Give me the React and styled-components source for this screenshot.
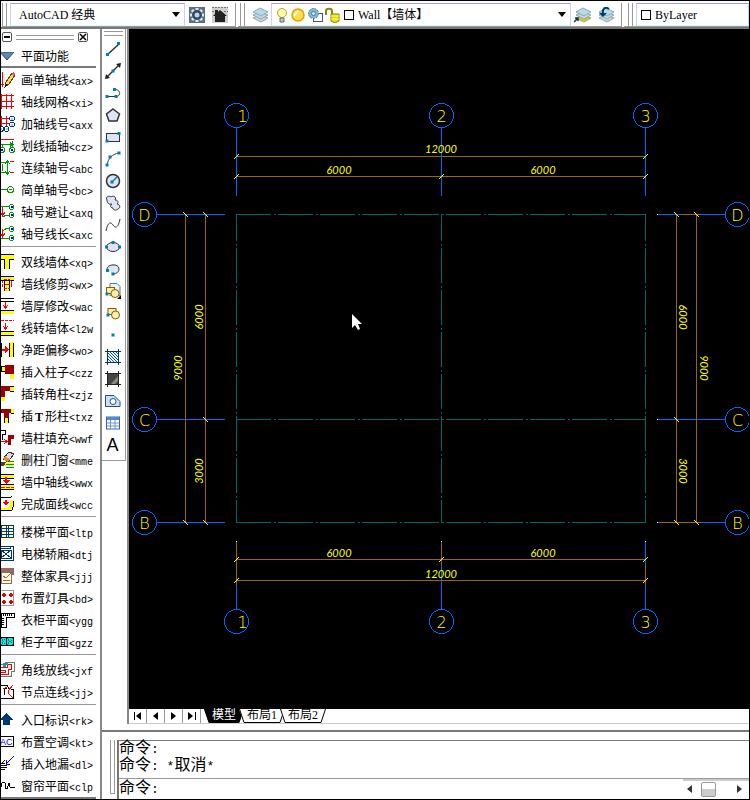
import styled, { createGlobalStyle } from "styled-components"

const GlobalStyle = createGlobalStyle`
  * { box-sizing: border-box; }
  body {
    margin: 0;
    background: #fff;
    color: #000;
    font-family: "Liberation Serif", "Noto Sans CJK SC", serif;
    font-size: 12px;
  }
  button, select, input {
    margin: 0;
    padding: 0;
    border: 0;
    background: none;
    color: inherit;
    font: inherit;
  }
  svg { display: block; flex: none; }
`

const Window = styled.div`
  display: flex;
  flex-direction: column;
  min-height: 100vh;
  border: 1px solid #000;
`

/* top toolbars */
const TopBar = styled.header`
  display: flex;
  gap: 2px;
  height: 26px;
  padding: 2px 0 0 1px;
`
const ToolGroup = styled.div`
  display: flex;
  align-items: stretch;
  flex: ${p => p.$grow || "none"};
  min-width: 0;
  padding-right: ${p => p.$last ? 0 : "4px"};
  border-right: ${p => p.$last ? "none" : "1px solid #999"};
  border-bottom: 1px solid #999;
`
const Grip = styled.span`
  flex: none;
  width: 5px;
  margin: 0 3px 0 ${p => p.$gap || "0"};
  border: solid #999;
  border-width: 0 1px;
`
const Combo = styled.label`
  display: flex;
  align-items: center;
  gap: 2px;
  flex: ${p => p.$width ? `0 0 ${p.$width}` : "1"};
  min-width: 0;
  padding: 0 4px;
  border: 1px solid #ccccff;
  border-top-color: #a99bd8;
  border-bottom-color: #ccffff;
`
const Select = styled.select`
  flex: 1;
  min-width: 0;
  padding-left: ${p => p.$indent || "2px"};
  appearance: none;
  line-height: 18px;
`
const IconButton = styled.button`
  display: flex;
  align-items: center;
  justify-content: center;
  flex: none;
  width: 23px;
`
const Swatch = styled.span`
  flex: none;
  width: 10px;
  height: 10px;
  border: 1px solid #000;
`

/* main area */
const Body = styled.div`
  display: flex;
  flex: 1;
  border-top: 2px solid #777;
`
const Palette = styled.aside`
  flex: none;
  width: 99px;
  padding-right: 4px;
`
const PaletteBar = styled.div`
  display: flex;
  align-items: center;
  gap: 4px;
  height: 16px;
  padding: 0 8px 0 1px;
`
const PaletteGrip = styled.span`
  flex: 1;
  height: 5px;
  border: solid #999;
  border-width: 1px 0;
`
const SmallButton = styled.button`
  width: 10px;
  height: 10px;
  border: 1px solid #555;
  border-radius: 2px;
`
const PaletteTitle = styled.button`
  display: flex;
  align-items: center;
  gap: 7px;
  width: 100%;
  height: 23px;
  margin-bottom: 1px;
  border-bottom: 2px solid #777;
`
const CommandButton = styled.button`
  display: flex;
  align-items: center;
  gap: 6px;
  width: 100%;
  height: 22px;
  white-space: nowrap;
`
const CommandName = styled.span`
  padding-top: 4px;
  line-height: 18px;
`
const Code = styled.span`
  font-family: "Liberation Mono", monospace;
  font-size: 10px;
`
const Letter = styled.b`
  display: inline-block;
  width: 12px;
  text-align: center;
`
const Divider = styled.div`
  height: 6px;
  padding-top: 1px;
  &::before {
    content: "";
    display: block;
    height: 1px;
    background: #999;
  }
`
const PaletteEnd = styled.div`
  height: 2px;
  background: #777;
`
const Right = styled.main`
  display: flex;
  flex-direction: column;
  flex: 1;
  min-width: 0;
  border-left: 2px solid #888;
`
const Work = styled.div`
  display: flex;
  flex: 1;
  padding-bottom: 6px;
`
const DrawTools = styled.div`
  display: flex;
  flex-direction: column;
  align-self: flex-start;
  flex: none;
  width: 24px;
  padding: 0 2px 4px 0;
  border: solid #999;
  border-width: 0 1px 1px 0;
`
const DrawGrip = styled.span`
  height: 5px;
  margin: 2px 0 2px 2px;
  border: solid #999;
  border-width: 1px 0;
`
const DrawButton = styled.button`
  display: flex;
  align-items: center;
  justify-content: center;
  height: 22px;
`
const TextTool = styled.span`
  font-family: "Liberation Sans", sans-serif;
  font-size: 18px;
  line-height: 22px;
`
const Viewport = styled.section`
  display: flex;
  flex-direction: column;
  flex: 1;
  min-width: 0;
  margin-left: 1px;
  border-left: 2px solid #888;
`
const Model = styled.div`
  flex: 1 1 680px;
  min-width: 0;
  background: #000;
  overflow: hidden;
`
const Plan = styled.svg`
  width: 100%;
  height: 680px;
  font-family: Lato, "Liberation Sans", sans-serif;
  font-size: 11px;
`
const Tabs = styled.nav`
  display: flex;
  height: 15px;
  border-bottom: 1px solid #ccc;
`
const PageButton = styled.button`
  display: flex;
  align-items: center;
  justify-content: center;
  width: 18px;
  border-right: 1px solid #999;
`
const TabStrip = styled.div`
  display: flex;
  margin-left: 3px;
`
const Tab = styled.button`
  display: flex;
  align-items: stretch;
  height: 14px;
  margin-right: -5px;
  color: ${p => p.$active ? "#fff" : "#000"};
`
const TabText = styled.span`
  background: ${p => p.$active ? "#000" : "#fff"};
  border-bottom: 1px solid #000;
  line-height: 13px;
`

/* command window */
const Command = styled.section`
  display: flex;
  border-top: 2px solid #777;
  padding: 8px 0 0 8px;
`
const CommandGrip = styled.span`
  width: 5px;
  margin: 0 2px 5px 0;
  border: solid #999;
  border-width: 0 1px 1px;
`
const Console = styled.div`
  flex: 1;
  min-width: 0;
  border: solid #777;
  border-width: 1px 0 0 2px;
  font-family: "Liberation Mono", "Noto Sans CJK SC", monospace;
  font-size: 16px;
`
const Output = styled.div`
  height: 38px;
  border-bottom: 1px solid #999;
  line-height: 17px;
  white-space: pre;
`
const Half = styled.span`
  font-size: 13px;
`
const Prompt = styled.div`
  display: flex;
  align-items: flex-start;
  height: 20px;
  line-height: 20px;
`
const PromptInput = styled.input`
  flex: 1;
  min-width: 0;
  height: 18px;
  outline: none;
  padding-left: 8px;
`
const Scroll = styled.div`
  display: flex;
  align-items: center;
  justify-content: space-between;
  width: 66px;
  height: 18px;
  padding: 0 7px 0 4px;
  border-top: 2px solid #ccc;
`
const Thumb = styled.span`
  width: 15px;
  height: 15px;
  margin-right: 13px;
  border: 1px solid #999;
  border-radius: 2px;
  background: linear-gradient(#fff 45%, #ccc 45%);
`

const Arrow = () => (
  <svg width="8" height="5"><path d="M0 0h8L4 5z" /></svg>
)

const R = "#ff0000"
const G = "#009900"
const D = "#990000"
const Y = "#ffff00"
const N = "#003870"

const Ring = ({ x, y, c = G }) => (
  <g>
    <circle cx={x} cy={y} r="2.5" fill="#fff" stroke={c} />
    <rect x={x - 1} y={y - 1} width="2" height="2" fill={c === G ? "#0000ff" : "#99ccff"} />
  </g>
)

const Down = ({ y = 4 }) => (
  <path d={`M4.5 ${y}v6M2 ${y + 3}l2.500 3 2.500-3`} fill="none" stroke={R} />
)

const icons = {
  ax: <><path d="M1.500 0v15M0 12.500h3M4 12.500h2" stroke={R} /><path d="M5 10l6-9 3 2-6 9-4 3z" fill="#ffd54a" stroke="#704010" /><path d="M10 2l3 2 1-2-2-2z" fill="#e58" /><path d="M4 15l1-3 2 1z" /></>,
  xi: <path d="M0 1.500h13M0 7.500h13M0 12.500h13M5.500 0v15M10.500 0v15M.5 0v15" stroke={R} />,
  axx: <><path d="M0 2.500h9M0 7.500h9M5.500 0v10M.5 0v10" stroke={R} /><Ring x={11} y={2.5} c={N} /><Ring x={11} y={8.5} c={N} /><Ring x={5.5} y={13} c={N} /><Ring x={0} y={13} c={N} /></>,
  cz: <><path d="M0 1.500h13" stroke={R} /><path d="M0 6.500h13M11.500 3v6M1.500 6v4" stroke={G} /><path d="M9 4v5l4-2.500z" fill={G} /><Ring x={11} y={12} /><Ring x={1} y={12} /></>,
  abc: <><path d="M0 2.500h6M0 12.500h6M6.500 0v15M4 4l2.500-3L9 4M4 11l2.500 3L9 11M1.500 4v7" fill="none" stroke={G} /><path d="M9 1.500h4M9 12.500h4" stroke={R} /></>,
  bc: <><path d="M0 7.500h6M8 7.500h3" stroke={G} /><circle cx="9.500" cy="7.500" r="3" fill="none" stroke={G} /></>,
  axq: <><path d="M1.500 3v8M-1 8l2.500 4L4 8" fill="none" stroke={R} /><path d="M0 2.500h8M2 13l3-2h3" fill="none" stroke={G} /><Ring x={10.5} y={3} /><Ring x={10.5} y={11} /></>,
  axc: <><path d="M1.500 3v7M-1 7l2.500 4L4 7" fill="none" stroke={R} /><path d="M2 5l3-2.500h3M0 12.500h8" fill="none" stroke={G} /><Ring x={10.5} y={3} /><Ring x={10.5} y={12} /></>,
  xq: <><path d="M0 0h13v5H8v10H3V5H0z" fill={Y} /><path d="M0 .5h13M0 5.500h3.500V15M13 5.500H8.500V15" fill="none" stroke="#000" /></>,
  wx: <><path d="M0 0h13v4H8v11H3V4H0z" fill={Y} /><path d="M0 .5h13M0 4.500h13M3.500 5v10M8.500 5v10" stroke="#000" /><circle cx="6" cy="8" r="5" fill="none" stroke={R} strokeDasharray="3 1" /><path d="M4 8h5" stroke={R} /></>,
  wac: <><path d="M0 .5h13M0 3.500h13M0 12.500h13" stroke="#000" /><Down /><rect y="13" width="13" height="3" fill={Y} /></>,
  l2w: <><path d="M0 .5h13" stroke={R} strokeDasharray="3 1" /><Down y={3} /><rect y="11" width="13" height="4" fill={Y} /><path d="M0 11.500h13M0 15.500h13" stroke="#000" /></>,
  wo: <><rect x="9" width="4" height="15" fill={Y} /><path d="M.5 1v14M8.500 1v14M12.500 1v14" stroke="#000" /><path d="M1 7.500h3" stroke={R} strokeWidth="2" /><path d="M4 4l4 3.500L4 11z" fill={R} /></>,
  czz: <><rect y="2" width="5" height="5" fill={Y} stroke="#000" /><rect x="9" y="10" width="4" height="5" fill={Y} /><rect x="4" y="1" width="9" height="9" fill={D} /></>,
  zjz: <><path d="M0 0h9v5H4v6H0z" fill={D} /><rect x="9" y="1" width="4" height="4" fill={Y} /><rect y="11" width="4" height="4" fill={Y} /><path d="M9 .5h4M9 5.500h4" stroke="#000" /></>,
  txz: <><path d="M0 1h10v4H8v5H3V5H0z" fill={D} /><rect x="10" y="1" width="3" height="4" fill={Y} /><rect x="3" y="10" width="5" height="5" fill={Y} /><path d="M10 5.500h3M3.500 10v5M7.500 10v5" stroke="#000" /></>,
  wwf: <><path d="M0 .5h4v4H1.500V10" fill="none" stroke="#000" /><path d="M0 11.500h5M3 9l3 2.500L3 14" fill="none" stroke={R} /><path d="M7 5h6v4h-3v6H7z" fill={D} /></>,
  mme: <><path d="M0 12.500h13" stroke={Y} strokeWidth="3" /><path d="M5 9.500h8M5 12.500h8M5 15.500h8" stroke={G} /><path d="M2 7l6-7 5 2-6 8z" fill="#ddd" stroke="#333" /><path d="M2 7l2-3 5 3-2 3z" fill="#e88a2a" /><path d="M0 10h5l-2 4H0z" fill="#444" /></>,
  wwx: <><rect width="13" height="4" fill={Y} /><path d="M0 .5h13M0 4.500h13M0 10.500h13M0 15.500h13" stroke="#000" /><path d="M4.500 3v5" stroke={R} strokeWidth="2" /><path d="M1 6h8L5 10z" fill={R} /><rect y="11" width="13" height="4" fill={Y} /><path d="M0 13.500h13" stroke={R} strokeDasharray="4 1" /></>,
  wcc: <><path d="M0 13h7q3 0 3-3V4" fill="none" stroke={Y} strokeWidth="3" /><path d="M0 1.500h7q2 0 4-1M0 14.500h9q3 0 3-4V5" fill="none" stroke="#000" /><path d="M4.500 4v4" stroke={R} strokeWidth="2" /><path d="M1 6h7l-3 4z" fill={R} /></>,
  ltp: <><rect width="13" height="16" fill="#ffffcc" /><path d="M0 1.500h13M0 4.500h13M0 7.500h13M0 10.500h13M0 13.500h13M.5 1v12M5.500 1v12M7.500 1v12M12.500 1v12" fill="none" stroke={N} /></>,
  dtj: <><rect y="4" width="10" height="8" fill="none" stroke={N} /><path d="M0 4l10 8M10 4L0 12M0 .5h9v2H0M0 14.500h10M12.500 0v15M9 .5h4M10 14.500h3" fill="none" stroke={N} /></>,
  jjj: <><rect x="0" y="4" width="10" height="11" fill="#ffffcc" stroke="#996666" /><rect y="0" width="13" height="4" fill="#996666" /><path d="M2 8l3 2 5-5M2 12h7" fill="none" stroke="#996666" /><rect x="10" y="4" width="3" height="3" fill="#996666" /></>,
  bd: <><path d="M0 .5h12.500v15H0" fill="none" stroke="#999" /><path d="M.5 4.500h4M2.500 2.500v4M7.500 4.500h4M9.500 2.500v4M.5 11.500h4M2.500 9.500v4M7.500 11.500h4M9.500 9.500v4" stroke="#dd0000" strokeWidth="2" /></>,
  ygg: <><path d="M0 1.500h13V5.500H5.500V15H.5V1" fill="#fff" stroke="#000" /><path d="M2.500 2v2M4.500 2v2M6.500 2v2M8.500 2v2M10.500 2v2M1 6.500h2M1 8.500h2M1 10.500h2M1 12.500h2" stroke="#000" /></>,
  gzz: <><path d="M0 3h13v8H0z" fill="#00eeee" /><path d="M0 3.500h13M0 11.500h13M5.500 3v8M12.500 3v8" stroke="#000" /><path d="M0 4l5 7M0 11l5-7M6 4l6 7M6 11l6-7" stroke="#008080" strokeDasharray="1 1" /></>,
  jxf: <><path d="M0 2.500h4V.5h9v9h-3v5H0" fill="none" stroke="#777" /><path d="M0 5.500h6v-3h4v5H7v5H0M0 8.500h4v2H0" fill="none" stroke={R} /><path d="M2 1h5v2H5v2H2z" fill="#00aaaa" /></>,
  jj: <><path d="M0 1.500h6l2 3 4 1v8.500H0M6 4H3v7" fill="none" stroke="#000" /><path d="M2 5l4-2M7 7l5-6M7 9l5 5M7 7v2" fill="none" stroke={R} /></>,
  rk: <path d="M5.500 1l7 7H9v5H2V8h-3z" fill={N} />,
  kt: <><path d="M-1 2.500h13.500v10H-1" fill="none" stroke="#000" /><text x="-1" y="11" fontFamily="Liberation Sans, sans-serif" fontSize="9" fill="#0000ff">AC</text></>,
  dl: <><path d="M0 7.500h4M0 9.500h6M0 11.500h6M0 13.500h4M1 7l3-3" stroke="#000" /><path d="M13 0L6 7M5 4v4h4" fill="none" stroke="#0000ff" /></>,
  clp: <path d="M0 9V6l2-2 2 1v5l2 1 2-6 1 4h5" fill="none" stroke="#000" />,
}

const groups = [
  [["画单轴线", "ax"], ["轴线网格", "xi"], ["加轴线号", "axx"], ["划线插轴", "cz"], ["连续轴号", "abc"], ["简单轴号", "bc"], ["轴号避让", "axq"], ["轴号线长", "axc"]],
  [["双线墙体", "xq"], ["墙线修剪", "wx"], ["墙厚修改", "wac"], ["线转墙体", "l2w"], ["净距偏移", "wo"], ["插入柱子", "czz"], ["插转角柱", "zjz"], [<>插<Letter>T</Letter>形柱</>, "txz"], ["墙柱填充", "wwf"], ["删柱门窗", "mme"], ["墙中轴线", "wwx"], ["完成面线", "wcc"]],
  [["楼梯平面", "ltp"], ["电梯轿厢", "dtj"], ["整体家具", "jjj"], ["布置灯具", "bd"], ["衣柜平面", "ygg"], ["柜子平面", "gzz"]],
  [["角线放线", "jxf"], ["节点连线", "jj"]],
  [["入口标识", "rk"], ["布置空调", "kt"], ["插入地漏", "dl"], ["窗帘平面", "clp"]],
]

const Dot = ({ x, y }) => <rect x={x - 1.5} y={y - 1.5} width="3" height="3" fill="#0080b8" />
const ink = { fill: "none", stroke: "#333" }
const soft = { fill: "#dce4f6", stroke: "#333" }

const tools = [
  ["Line", <><path d="M2 14L14 3" {...ink} strokeWidth="1.500" /><Dot x={2.5} y={13.5} /><Dot x={13.5} y={2.5} /></>],
  ["Construction line", <><path d="M1 15L15 1" {...ink} strokeWidth="1.500" /><path d="M0 16l1-5 4 4zM16 0l-1 5-4-4z" fill="#222" /><Dot x={8} y={8} /></>],
  ["Polyline", <><path d="M2 11.500h9c5 0 5-7-1-7" {...ink} /><Dot x={2} y={11.5} /><Dot x={11} y={11.5} /><Dot x={9.5} y={4.5} /></>],
  ["Polygon", <path d="M8 2l6.500 5-2.500 7H4L1.500 7z" {...soft} strokeWidth="1.500" />],
  ["Rectangle", <><rect x="1.500" y="4.500" width="13" height="8" {...soft} /><Dot x={2} y={12} /><Dot x={14} y={4.5} /></>],
  ["Arc", <><path d="M2 14C3 8 7 3 14 2" {...ink} /><Dot x={2} y={14} /><Dot x={5} y={6} /><Dot x={14} y={2} /></>],
  ["Circle", <><circle cx="8" cy="8" r="6.500" {...soft} strokeWidth="1.500" /><path d="M8 8l4-4" stroke="#0080b8" strokeWidth="1.500" /><Dot x={7} y={9} /></>],
  ["Revision cloud", <path d="M2 5C0 2 4 0 6 2c2-2 6 0 4 3 3 0 4 2 2 4 3 0 4 4 1 5-2 2-5 1-5-1-3 0-3-3-1-4-3 1-5-1-5-4z" {...soft} />],
  ["Spline", <path d="M1 14C3 4 6 5 8 8s5 4 7-6" {...ink} />],
  ["Ellipse", <><ellipse cx="8" cy="8" rx="6.500" ry="4.500" {...soft} /><Dot x={1.5} y={8} /><Dot x={14.5} y={8} /><Dot x={8} y={3.5} /></>],
  ["Ellipse arc", <><path d="M2 8c0-5 12-6 12 0 0 4-4 5-7 5" {...soft} /><Dot x={2.5} y={9.5} /><Dot x={8} y={13} /></>],
  ["Insert block", <><path d="M5 .5h7l3 3v9H5z" fill="#e8f0ff" stroke="#5080a0" /><rect x="1.500" y="4.500" width="8" height="6" fill="#ffeeaa" stroke="#806000" /><circle cx="10" cy="10.500" r="4" fill="#ffeeaa" stroke="#806000" /><path d="M16 12v4h-4z" /><Dot x={2} y={11} /></>],
  ["Make block", <><rect x="3" y="3.500" width="8" height="6" fill="#ffeeaa" stroke="#806000" /><circle cx="10.500" cy="10" r="4" fill="#ffeeaa" stroke="#806000" /><Dot x={3} y={10} /></>],
  ["Point", <Dot x={8} y={8} />],
  ["Hatch", <><rect x="3" y="3" width="10" height="10" fill="#eef4ff" /><path d="M3 10l3 3M3 7l6 6M3 4l9 9M5 3l8 8M8 3l5 5M11 3l2 2" stroke="#0060a0" /><path d="M0 2.500h16M0 13.500h16M2.500 0v16M13.500 0v16" stroke="#003860" /></>],
  ["Gradient", <><rect x="3" y="3" width="10" height="10" fill="#444" /><path d="M6 13l7-8v5l-3 3z" fill="#8d8d74" /><path d="M0 2.500h16M0 13.500h16M2.500 0v16M13.500 0v16" stroke="#222" /></>],
  ["Region", <><path d="M.5 2.500H9l6 6v5H.5z" fill="#d0def5" stroke="#205090" /><circle cx="8" cy="8.500" r="3" fill="#fff" stroke="#205090" /></>],
  ["Table", <><rect x="1.500" y="2" width="13" height="12" fill="#fff" stroke="#3568b0" /><rect x="2" y="2" width="12" height="3" fill="#5588cc" /><path d="M2 8h12M2 11h12M5.500 5v9M10 5v9" stroke="#6c94cc" /></>],
]

const Layers = ({ children, base = "#c5d9df" }) => (
  <svg width="18" height="16">
    <path d="M2 11l7-3 8 3-7 4z" fill={base} stroke="#8fa4b4" />
    <path d="M2 8l7-3 8 3-7 4z" fill="#c5d9df" stroke="#8fa4b4" />
    <path d="M2 5l7-4 8 4-7 4z" fill="#b4dce3" stroke="#8fa4c0" />
    {children}
  </svg>
)

const AXIS = "#0066ff"
const DIM = "#996600"
const GRID = "#006666"
const cols = [[107.5, "1"], [312.5, "2"], [516.5, "3"]]
const rows = [[185.5, "D"], [390.5, "C"], [493.5, "B"]]

const Bubble = ({ x, y, label }) => (
  <g>
    <circle cx={x} cy={y} r="12" fill="none" stroke={AXIS} />
    <text x={label === "1" ? x + 6 : x} y={y + 6} textAnchor="middle" fill={Y} fontFamily="DejaVu Sans, sans-serif" fontWeight="200" fontSize="16">{label}</text>
  </g>
)

const Size = ({ x, y, turn = 0, children }) => (
  <text transform={`translate(${x} ${y}) rotate(${turn})`} textAnchor="middle" fill={Y} fontStyle="italic">{children}</text>
)

const Tick = ({ x, y, flip }) => (
  <path d={flip ? `M${x - 2.5} ${y - 2.5}l5 5` : `M${x - 2.5} ${y + 2.5}l5-5`} stroke={Y} />
)

function FloorPlan() {
  return (
    <Plan shapeRendering="crispEdges">
      <g stroke={GRID} strokeDasharray="35 3 2 2">
        {rows.map(([y]) => <path key={y} d={`M107 ${y}H517`} />)}
        {cols.map(([x]) => <path key={x} d={`M${x} 185V494`} strokeDashoffset="8" />)}
      </g>
      <g stroke={AXIS}>
        {cols.map(([x]) => <path key={x} d={`M${x} 99V167M${x} 512V580`} />)}
        {rows.map(([y]) => <path key={y} d={`M28 ${y}H96M528 ${y}H596`} />)}
      </g>
      <g stroke={DIM}>
        <path d="M107 127.500H517M107 147.500H517M107 530.500H517M107 551.500H517" />
        <path d="M56.500 185V494M76.500 185V494M547.500 185V494M567.500 185V494" />
        <path d="M107.500 514V557M312.500 514V537M516.500 536V557" />
        <path d="M552 185.500H572M531 493.500H573" />
      </g>
      <path d="M312.500 99V167" stroke={AXIS} />
      {cols.map(([x, label]) => (
        <g key={label}>
          <Bubble x={x} y={86.5} label={label} />
          <Bubble x={x} y={592.5} label={label} />
          <Tick x={x} y={147.5} />
          <Tick x={x} y={530.5} />
          {label !== "2" && <><Tick x={x} y={127.5} /><Tick x={x} y={551.5} /></>}
          <rect x={x - 0.5} y="512" width="1" height="1" fill="#fff" />
        </g>
      ))}
      {rows.map(([y, label]) => (
        <g key={label}>
          <Bubble x={15.5} y={y} label={label} />
          <Bubble x={608.5} y={y} label={label} />
          <Tick x={76.5} y={y} flip />
          <Tick x={547.5} y={y} flip />
          {label !== "C" && <><Tick x={56.5} y={y} flip /><Tick x={567.5} y={y} flip /></>}
          <rect x="528" y={y - 0.5} width="1" height="1" fill="#fff" />
        </g>
      ))}
      <Size x={312} y={124}>12000</Size>
      <Size x={210} y={145}>6000</Size>
      <Size x={414} y={145}>6000</Size>
      <Size x={210} y={528}>6000</Size>
      <Size x={414} y={528}>6000</Size>
      <Size x={312} y={549}>12000</Size>
      <Size x={74} y={288} turn={-90}>6000</Size>
      <Size x={53} y={339} turn={-90}>9000</Size>
      <Size x={74} y={442} turn={-90}>3000</Size>
      <Size x={550} y={288} turn={90}>6000</Size>
      <Size x={571} y={339} turn={90}>9000</Size>
      <Size x={550} y={442} turn={90}>3000</Size>
      <path d="M223 285v14l3-3 3 5 2-1-2-5h4z" fill="#fff" shapeRendering="auto" />
    </Plan>
  )
}

function TopToolbars() {
  return (
    <TopBar>
      <ToolGroup>
        <Grip />
        <Combo $width="175px">
          <Select aria-label="Workspace" $indent="4px"><option>AutoCAD 经典</option></Select>
          <Arrow />
        </Combo>
        <IconButton aria-label="Workspace settings">
          <svg width="16" height="16">
            <rect width="16" height="16" fill="#5a7086" />
            <path d="M8 1v14M1 8h14M3 3l10 10M13 3L3 13" stroke="#dde6ee" strokeWidth="3" />
            <circle cx="8" cy="8" r="4" fill="#2f4356" stroke="#33475a" strokeWidth="2" />
            <circle cx="8" cy="8" r="2.500" fill="#b8d4e8" />
          </svg>
        </IconButton>
        <IconButton aria-label="My workspace">
          <svg width="16" height="16">
            <rect width="16" height="16" fill="#d2d2cc" />
            <path d="M0 .5h16M0 4.500h4M12 4.500h4" stroke="#777" strokeDasharray="2 1" />
            <path d="M1 9l2-2V3h3v2l2-2 7 6h-2v6H3V9z" fill="#222" />
          </svg>
        </IconButton>
      </ToolGroup>
      <ToolGroup $grow="1">
        <Grip $gap="2px" />
        <IconButton aria-label="Layer properties"><Layers /></IconButton>
        <Combo>
          <svg width="66" height="16">
            <circle cx="6" cy="6" r="4.500" fill="#ffffaa" stroke="#c89c28" />
            <path d="M4 11h4v4H4z" fill="#c4c4c4" stroke="#667" />
            <circle cx="22" cy="8" r="6" fill="#ffe04a" stroke="#e0a000" strokeWidth="1.500" />
            <path d="M18 9l4-5" stroke="#fff" strokeWidth="2" />
            <rect x="37.500" y="6.500" width="9" height="8" fill="#fff" stroke="#555" />
            <circle cx="37.500" cy="6.500" r="5" fill="#83b8d2" stroke="#447ba0" strokeDasharray="2 1" />
            <circle cx="37.500" cy="6.500" r="2" fill="#cceeff" stroke="#447ba0" />
            <path d="M50 8V4c0-3 6-3 6 0v4" fill="none" stroke="#8d8600" strokeWidth="2" />
            <path d="M55 7h8v7l-4 2-4-2z" fill="#e8e000" stroke="#888000" />
            <path d="M55 9h8M55 12h8" stroke="#fff780" />
          </svg>
          <Swatch />
          <Select aria-label="Layer"><option>Wall【墙体】</option></Select>
          <Arrow />
        </Combo>
        <IconButton aria-label="Make object layer current">
          <Layers base="#ddd000"><path d="M0 15l4-4M1 11h3v3" fill="none" stroke={N} strokeWidth="1.500" /></Layers>
        </IconButton>
        <IconButton aria-label="Previous layer">
          <Layers><path d="M12 2C8-1 5 2 6 7" fill="none" stroke={N} strokeWidth="2" /><path d="M2 6h8l-4 4z" fill={N} /></Layers>
        </IconButton>
      </ToolGroup>
      <ToolGroup $last>
        <Grip $gap="4px" />
        <Combo $width="113px">
          <Swatch />
          <Select aria-label="Colour"><option>ByLayer</option></Select>
        </Combo>
      </ToolGroup>
    </TopBar>
  )
}

function App() {
  return (
    <Window>
      <GlobalStyle />
      <TopToolbars />
      <Body>
        <Palette>
          <PaletteBar>
            <SmallButton aria-label="Collapse"><svg width="8" height="8"><path d="M1 4h6" stroke="#000" strokeWidth="2" /></svg></SmallButton>
            <PaletteGrip />
            <SmallButton aria-label="Close"><svg width="8" height="8"><path d="M1 1l6 6M7 1L1 7" stroke="#000" strokeWidth="1.500" /></svg></SmallButton>
          </PaletteBar>
          <PaletteTitle>
            <svg width="13" height="8"><path d="M-1 0h14L6 8z" fill="#5588bb" stroke="#446" /></svg>
            平面功能
          </PaletteTitle>
          {groups.map((group, i) => (
            <div key={i}>
              {i > 0 && <Divider />}
              {group.map(([name, code]) => (
                <CommandButton key={code}>
                  <svg width="14" height="16" shapeRendering="crispEdges">{icons[code]}</svg>
                  <CommandName>{name}<Code>&lt;{code}{code.length < 3 && ">"}</Code></CommandName>
                </CommandButton>
              ))}
            </div>
          ))}
          <PaletteEnd />
        </Palette>
        <Right>
          <Work>
            <DrawTools>
              <DrawGrip />
              {tools.map(([name, icon]) => (
                <DrawButton key={name} aria-label={name}>
                  <svg width="16" height="16">{icon}</svg>
                </DrawButton>
              ))}
              <DrawButton aria-label="Multiline text"><TextTool>A</TextTool></DrawButton>
            </DrawTools>
            <Viewport>
              <Model><FloorPlan /></Model>
              <Tabs>
                <PageButton aria-label="First layout"><svg width="8" height="8"><path d="M0 0h1v8H0zM7 0v8L2 4z" /></svg></PageButton>
                <PageButton aria-label="Previous layout"><svg width="5" height="8"><path d="M5 0v8L0 4z" /></svg></PageButton>
                <PageButton aria-label="Next layout"><svg width="5" height="8"><path d="M0 0v8l5-4z" /></svg></PageButton>
                <PageButton aria-label="Last layout"><svg width="8" height="8"><path d="M7 0h1v8H7zM0 0v8l5-4z" /></svg></PageButton>
                <TabStrip>
                  {["模型", "布局1", "布局2"].map((name, i) => (
                    <Tab key={name} $active={i === 0}>
                      <svg width="8" height="14"><path d="M0 0h8v14H5z" fill={i ? "#fff" : "#000"} /><path d="M.5 0L5 13.500h3" fill="none" stroke="#000" /></svg>
                      <TabText $active={i === 0}>{name}</TabText>
                      <svg width="8" height="14"><path d="M8 0H0v14h3z" fill={i ? "#fff" : "#000"} /><path d="M7.500 0L3 13.500H0" fill="none" stroke="#000" /></svg>
                    </Tab>
                  ))}
                </TabStrip>
              </Tabs>
            </Viewport>
          </Work>
          <Command>
            <CommandGrip />
            <Console>
              <Output>
                <div>命令<Half>:</Half></div>
                <div>命令<Half>: *</Half>取消<Half>*</Half></div>
              </Output>
              <Prompt>
                <label htmlFor="prompt">命令<Half>:</Half></label>
                <PromptInput id="prompt" />
                <Scroll>
                  <svg width="5" height="8"><path d="M5 0v8L0 4z" fill="#333" /></svg>
                  <Thumb />
                  <svg width="5" height="8"><path d="M0 0v8l5-4z" fill="#333" /></svg>
                </Scroll>
              </Prompt>
            </Console>
          </Command>
        </Right>
      </Body>
    </Window>
  )
}

export default App
